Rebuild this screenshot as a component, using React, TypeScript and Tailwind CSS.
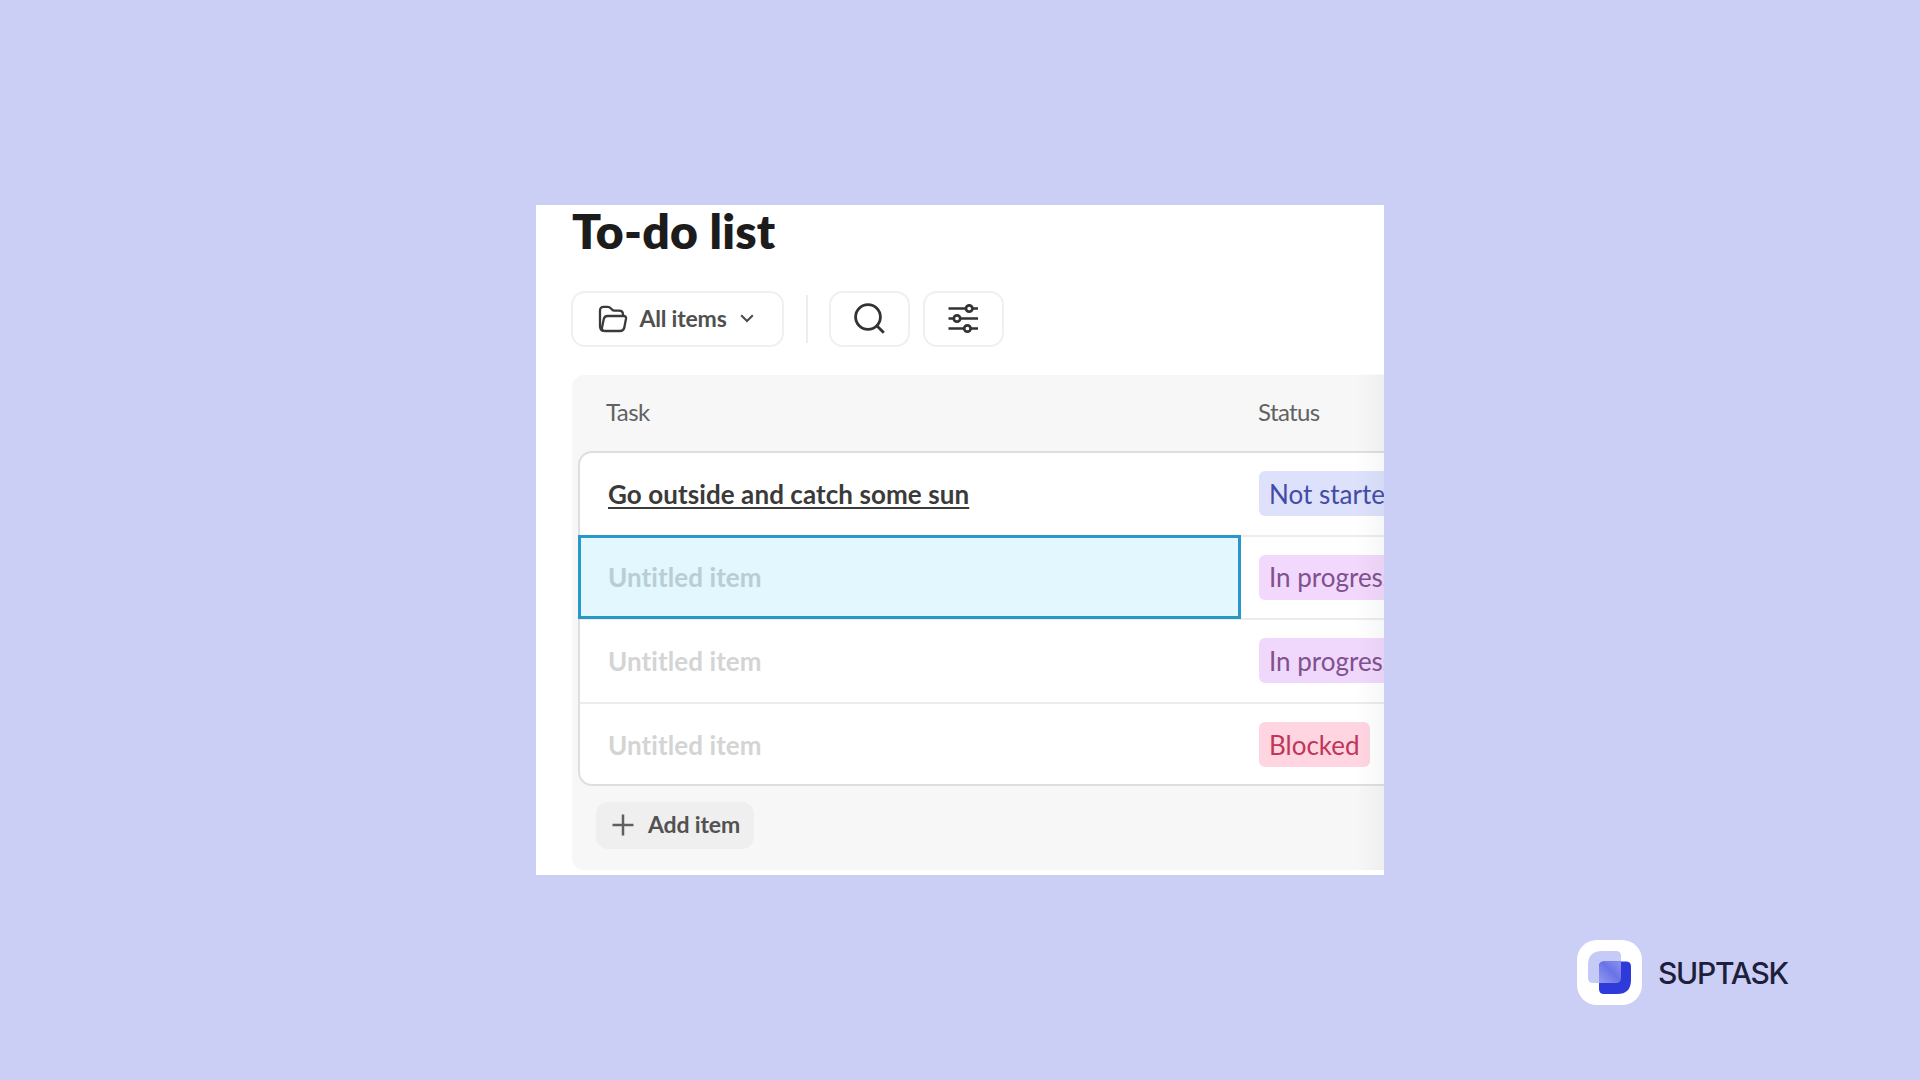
import clsx from "clsx";

type Row = {
  task: string;
  status: string;
  badge: string;
  selected?: boolean;
};

const rows: Row[] = [
  {
    task: "Go outside and catch some sun",
    status: "Not started",
    badge: "bg-[#dde1fb] text-[#434ba6]",
  },
  {
    task: "",
    status: "In progress",
    badge: "bg-[#f2d8fc] text-[#80508f]",
    selected: true,
  },
  {
    task: "",
    status: "In progress",
    badge: "bg-[#f0d8fc] text-[#80508f]",
  },
  {
    task: "",
    status: "Blocked",
    badge: "bg-[#ffd5e1] text-[#c03558]",
  },
];

function FolderIcon() {
  return (
    <svg className="h-[28px] w-[30px]" viewBox="0 0 30 28" fill="none" stroke="#3a3a3a" strokeWidth={2.3} strokeLinejoin="round">
      <path d="M5.5 26 C3 25.5 2 23.5 2 21 V5.5 C2 3 3.5 1.8 5.5 1.8 H9.5 C11 1.8 12 2.3 13 3.5 L14.2 4.8 C14.8 5.5 15.5 5.7 16.5 5.7 H21 C23.5 5.7 25 7 25 9.5 V11" />
      <path d="M9.5 11 H25.5 C27.5 11 28.3 12 28 13.8 L26.3 22.5 C25.8 25 24.5 26 22 26 H7 C4.6 26 3.6 24.6 4 22.5 L5.8 14 C6.2 12 7.5 11 9.5 11 Z" />
    </svg>
  );
}

function SearchIcon() {
  return (
    <svg className="h-[32px] w-[32px]" viewBox="0 0 32 32" fill="none" stroke="#333" strokeWidth={2.8}>
      <circle cx="14" cy="14" r="12.4" />
      <path d="M22.6 22.6 L29.8 29.8" />
    </svg>
  );
}

function FilterIcon() {
  return (
    <svg className="mr-px h-[30px] w-[30px]" viewBox="0 0 30 30" fill="none" stroke="#333" strokeWidth={2.7}>
      <path d="M0.5 4.5 H17.8 M24.6 4.5 H30 M0.5 14.5 H5.6 M12.4 14.5 H30 M0.5 24.5 H15.8 M22.6 24.5 H30" />
      <circle cx="21.2" cy="4.5" r="3.2" />
      <circle cx="9" cy="14.5" r="3.2" />
      <circle cx="19.4" cy="24.5" r="3.2" />
    </svg>
  );
}

function SuptaskLogo() {
  return (
    <svg className="h-[65px] w-[65px]" viewBox="0 0 65 65">
      <defs>
        <linearGradient id="overlap" x1="1" y1="0" x2="0" y2="1">
          <stop offset="0" stopColor="#8b93f2" />
          <stop offset="0.45" stopColor="#6a73e6" />
          <stop offset="1" stopColor="#929af0" />
        </linearGradient>
      </defs>
      <rect width="65" height="65" rx="20" fill="#fff" />
      <path d="M25 11 H39 Q44 11 44 16 V38 Q44 43 39 43 H16 Q11 43 11 38 V25 Q11 11 25 11 Z" fill="#c6caf7" />
      <path d="M27 21.5 H49 Q54 21.5 54 26.5 V40 Q54 54 40 54 H27 Q22 54 22 49 V26.5 Q22 21.5 27 21.5 Z" fill="#2f3adb" />
      <path d="M27 21.5 H44 V38 Q44 43 39 43 H22 V26.5 Q22 21.5 27 21.5 Z" fill="url(#overlap)" />
    </svg>
  );
}

function Toolbar() {
  return (
    <div className="mt-[33px] flex h-[56px] items-center">
      <button className="flex h-[56px] w-[213px] items-center rounded-[14px] border-2 border-[#f0f0f0] pl-[25px]">
        <FolderIcon />
        <span className="ml-[11px] w-[88px] whitespace-nowrap pb-px text-[23px] font-bold tracking-[-0.2px] text-[#505050]">
          All items
        </span>
        <svg className="mb-[2px] ml-[13px] h-[9px] w-[14px]" viewBox="0 0 14 9" fill="none" stroke="#4a4a4a" strokeWidth={2}>
          <path d="M1.2 1.2 L7 7 L12.8 1.2" />
        </svg>
      </button>
      <div className="ml-[22px] h-[48px] w-[2px] bg-[#ededed]" />
      <button className="ml-[21px] flex h-[56px] w-[81px] items-center justify-center rounded-[14px] border-2 border-[#f0f0f0]">
        <SearchIcon />
      </button>
      <button className="ml-[13px] flex h-[56px] w-[81px] items-center justify-center rounded-[14px] border-2 border-[#f0f0f0]">
        <FilterIcon />
      </button>
    </div>
  );
}

function TaskRow({ row }: { row: Row }) {
  return (
    <div className="flex h-[83.6px] border-b-2 border-[#ececec] last:border-transparent">
      <div
        className={clsx(
          "flex w-[663px] shrink-0 items-center whitespace-nowrap pt-[2px] text-[26px] font-bold tracking-[0.08px]",
          row.selected
            ? "-mt-[2px] -ml-[2px] mr-[2px] h-[84px] border-[3px] border-[#2798c7] bg-[#e2f7fe] pl-[27px]"
            : "pl-[28px]"
        )}
      >
        {row.task ? (
          <span className="text-[#3a3a3a] underline decoration-2 underline-offset-[3px]">{row.task}</span>
        ) : (
          <span className={row.selected ? "text-[#b9cdd5]" : "text-[#d4d4d4]"}>Untitled item</span>
        )}
      </div>
      <div className="flex shrink-0 items-center pl-[16px]">
        <span className={clsx("flex h-[45px] items-center whitespace-nowrap rounded-[6px] px-[10px] pt-px text-[26px]", row.badge)}>
          {row.status}
        </span>
      </div>
    </div>
  );
}

export default function App() {
  return (
    <div className="flex h-[1080px] w-[1920px] flex-col items-center overflow-hidden bg-[#cccff5] pt-[205px] font-['Lato',sans-serif]">
      <div className="relative h-[670px] w-[848px] shrink-0 overflow-hidden bg-white pl-[35px]">
        <h1 className="ml-px h-[53px] whitespace-nowrap text-[48px] leading-[52px] font-extrabold tracking-[0.25px] text-[#1d1c1d]">
          To-do list
        </h1>
        <Toolbar />

        {/* Table */}
        <div className="mt-[28px] ml-px h-[495px] w-[900px] rounded-[12px] bg-[#f7f7f7]">
          <div className="flex h-[76px] items-center pb-[2px] pl-[34px] text-[24px] tracking-[-0.6px] text-[#626262]">
            <span className="w-[652px]">Task</span>
            <span>Status</span>
          </div>
          <div className="ml-[6px] h-[335px] rounded-[14px] border-2 border-[#dedede] bg-white">
            {rows.map((row, i) => (
              <TaskRow key={i} row={row} />
            ))}
          </div>
          <button className="mt-[16px] ml-[24px] flex h-[47px] w-[158px] items-center rounded-[12px] bg-[#efefef] pb-[2px] pl-[16px]">
            <svg className="h-[22px] w-[22px]" viewBox="0 0 22 22" stroke="#5f5f5f" strokeWidth={2.5}>
              <path d="M11 0.5 V21.5 M0.5 11 H21.5" />
            </svg>
            <span className="ml-[14px] whitespace-nowrap text-[23px] font-bold tracking-[-0.15px] text-[#525252]">
              Add item
            </span>
          </button>
        </div>

        {/* Scroll shade */}
        <div className="absolute top-[169px] right-0 bottom-[5px] w-[28px] bg-gradient-to-r from-transparent to-[#607080]/6" />
      </div>

      <div className="mt-[65px] mr-[131px] flex items-center self-end">
        <SuptaskLogo />
        <span className="ml-[16px] w-[131px] whitespace-nowrap font-['Inter',sans-serif] text-[30px] leading-none font-medium tracking-[-1.3px] text-[#1d1f3d]">
          SUPTASK
        </span>
      </div>
    </div>
  );
}
